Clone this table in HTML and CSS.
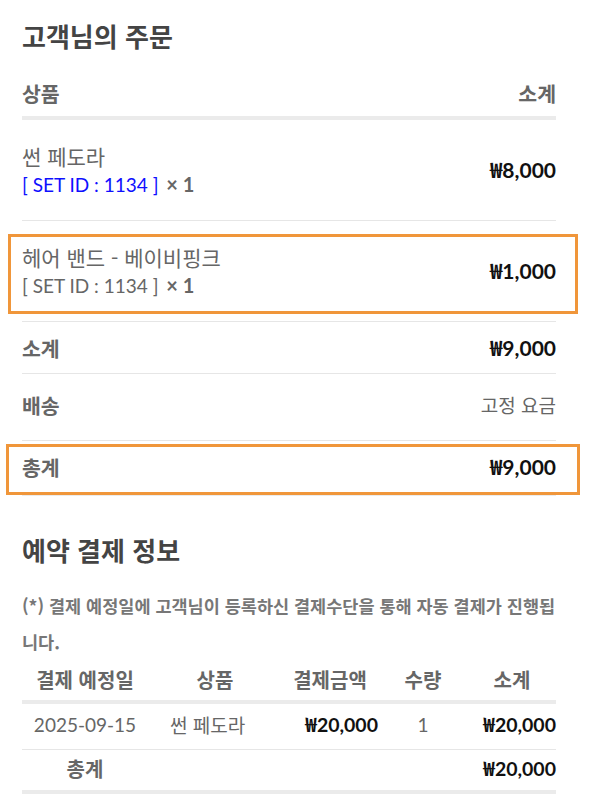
FILE: index.html
```html
<!DOCTYPE html>
<html lang="ko">
<head>
<meta charset="utf-8">
<title>주문 내역</title>
<link rel="stylesheet" href="styles.css">
</head>
<body>
<main class="page">
  <section class="order">
    <h2 class="section-title">고객님의 주문</h2>
    <div class="order-table">
      <div class="row head">
        <span class="label">상품</span>
        <span class="label">소계</span>
      </div>
      <div class="row item">
        <div class="item-info">
          <div class="item-name">썬 페도라</div>
          <div class="item-meta"><span class="set-id link">[ SET ID : 1134 ]</span> <span class="qty">× 1</span></div>
        </div>
        <span class="price"><span class="won">₩</span>8,000</span>
      </div>
      <div class="row item highlight hl-item">
        <div class="item-info">
          <div class="item-name">헤어 밴드 - 베이비핑크</div>
          <div class="item-meta"><span class="set-id">[ SET ID : 1134 ]</span> <span class="qty">× 1</span></div>
        </div>
        <span class="price"><span class="won">₩</span>1,000</span>
      </div>
      <div class="row sum subtotal">
        <span class="label">소계</span>
        <span class="price"><span class="won">₩</span>9,000</span>
      </div>
      <div class="row sum shipping">
        <span class="label">배송</span>
        <span class="plain">고정 요금</span>
      </div>
      <div class="row sum total highlight hl-total">
        <span class="label">총계</span>
        <span class="price"><span class="won">₩</span>9,000</span>
      </div>
    </div>
  </section>

  <section class="schedule">
    <h2 class="section-title second">예약 결제 정보</h2>
    <p class="note">(*) 결제 예정일에 고객님이 등록하신 결제수단을 통해 자동 결제가 진행됩니다.</p>
    <div class="sched-table">
      <div class="srow shead">
        <span class="c1">결제 예정일</span>
        <span class="c2 center">상품</span>
        <span class="c3 center">결제금액</span>
        <span class="c4">수량</span>
        <span class="c5 center">소계</span>
      </div>
      <div class="srow sbody">
        <span class="c1">2025-09-15</span>
        <span class="c2 pname">썬 페도라</span>
        <span class="c3 price"><span class="won">₩</span>20,000</span>
        <span class="c4 num">1</span>
        <span class="c5 price"><span class="won">₩</span>20,000</span>
      </div>
      <div class="srow stotal">
        <span class="c1 label">총계</span>
        <span class="c2"></span>
        <span class="c3"></span>
        <span class="c4"></span>
        <span class="c5 price"><span class="won">₩</span>20,000</span>
      </div>
    </div>
  </section>
</main>
</body>
</html>
```
FILE: styles.css
```css
* { box-sizing: border-box; }

html, body {
  margin: 0;
  padding: 0;
  background: #ffffff;
}

body {
  font-family: Lato, "Noto Sans CJK KR", "Noto Sans", sans-serif;
  color: #666666;
}

.page {
  width: 534px;
  margin-left: 22px;
}

.section-title {
  margin: 18px 0 0;
  font-family: "Noto Sans CJK KR", sans-serif;
  font-size: 26px;
  line-height: 36px;
  font-weight: 700;
  color: #444444;
}

.section-title.second {
  margin-top: 36px;
}

.row {
  display: flex;
  justify-content: space-between;
  align-items: center;
  border-bottom: 1px solid #e6e6e6;
}

.label {
  font-family: "Noto Sans CJK KR", sans-serif;
  font-size: 20.5px;
  line-height: 28px;
  font-weight: 700;
  color: #666666;
}

.row.head {
  padding: 25px 0 9px;
  border-bottom: 4px solid #ebebeb;
}

.row.item {
  padding: 22px 0 22px;
}

.item-name {
  font-family: "Noto Sans CJK KR", sans-serif;
  font-size: 21px;
  line-height: 28px;
  height: 28px;
  color: #666666;
}

.item-meta {
  font-family: Lato, sans-serif;
  font-size: 19px;
  line-height: 28px;
  height: 28px;
  white-space: nowrap;
}

.set-id {
  font-size: 19px;
  color: #666666;
}

.set-id.link {
  color: #0f0fff;
}

.qty {
  font-size: 20px;
  font-weight: 700;
  color: #666666;
  margin-left: 3px;
}

.price {
  font-family: Lato, sans-serif;
  font-size: 21px;
  line-height: 28px;
  font-weight: 700;
  color: #111111;
}

.won {
  font-family: "Noto Sans CJK KR", sans-serif;
  font-weight: 700;
  line-height: 1;
}

.plain {
  font-family: "Noto Sans CJK KR", sans-serif;
  font-size: 19px;
  line-height: 28px;
  color: #666666;
}

.row.sum {
  padding: 11px 0 11px;
}

.row.sum.subtotal {
  padding: 12px 0 11px;
}

.row.sum.shipping {
  padding: 17px 0 21px;
}

.row.sum.total {
  padding: 12px 0 11px;
  border-bottom: 4px solid #ebebeb;
}

.highlight {
  position: relative;
}

.highlight::after {
  content: "";
  position: absolute;
  border: 3px solid #f0963a;
  pointer-events: none;
}

.hl-item::after {
  top: 13px;
  height: 74px;
  left: -14px;
  right: -22px;
}

.hl-total::after {
  top: 3px;
  height: 45px;
  left: -16px;
  right: -24px;
}

.note {
  margin: 20px 0 0;
  font-family: "Noto Sans CJK KR", sans-serif;
  font-size: 17.5px;
  line-height: 36px;
  font-weight: 700;
  color: #777777;
}

.srow {
  display: grid;
  grid-template-columns: 126px 134px 96px 90px 88px;
  align-items: center;
}

.srow > span {
  line-height: 28px;
  white-space: nowrap;
}

.srow .c1 { text-align: center; }
.srow .c2 { text-align: left; }
.srow .c2.center { text-align: center; }
.srow .c3 { text-align: right; }
.srow .c3.center { text-align: center; }
.srow .c4 { text-align: center; }
.srow .c5 { text-align: right; }
.srow .c5.center { text-align: center; }

.shead {
  padding: 6px 0 6px;
  border-bottom: 4px solid #ebebeb;
}

.shead > span {
  font-family: "Noto Sans CJK KR", sans-serif;
  font-size: 20px;
  font-weight: 700;
  color: #666666;
}

.sbody {
  padding: 7px 0 10px;
  border-bottom: 1px solid #e6e6e6;
}

.sbody > span {
  font-family: Lato, "Noto Sans CJK KR", sans-serif;
  font-size: 19px;
  color: #666666;
}

.sbody .pname {
  font-family: "Noto Sans CJK KR", sans-serif;
  padding-left: 22px;
}

.sbody .price,
.stotal .price {
  font-size: 19.5px;
  font-weight: 700;
  color: #111111;
}

.stotal .label {
  font-size: 20px;
}

.stotal {
  padding: 5px 0 7px;
  border-bottom: 4px solid #ebebeb;
}
```
